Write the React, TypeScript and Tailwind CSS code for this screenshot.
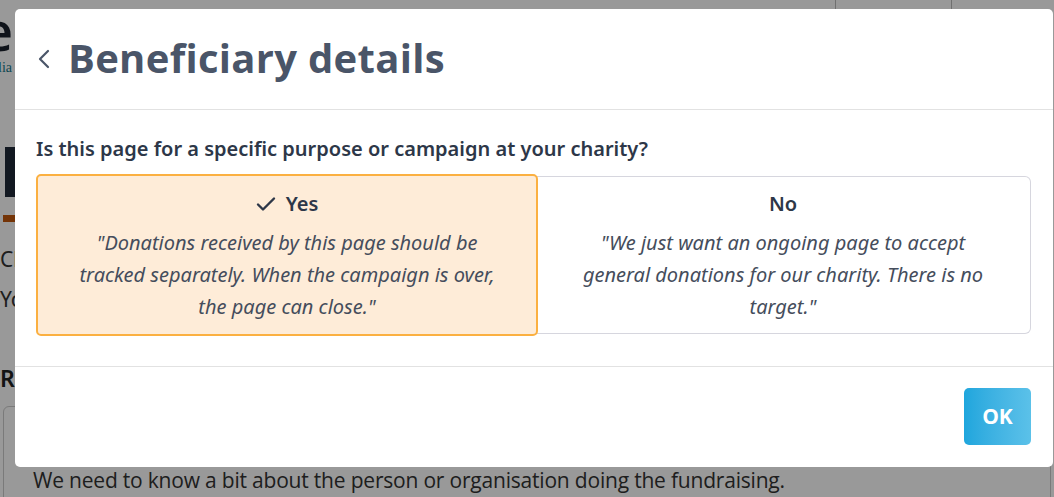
import React from "react";

const Chevron = () => (
  <svg width="14" height="22" viewBox="0 0 14 22" fill="none">
    <path d="M11 3L3 11l8 8" stroke="#4a5568" strokeWidth="2.2" strokeLinecap="round" strokeLinejoin="round" />
  </svg>
);

const Check = () => (
  <svg width="20" height="16" viewBox="0 0 20 16" fill="none">
    <path d="M2 8.5l5 5L18 2.5" stroke="#2d3748" strokeWidth="2.4" strokeLinecap="round" strokeLinejoin="round" />
  </svg>
);

const App = () => {
  return (
    <div className="relative w-[1054px] h-[497px] overflow-hidden bg-white font-['Noto_Sans',sans-serif] text-[#2d3748]">
      {/* page behind the modal */}
      <div className="flex flex-col">
        <div className="flex h-[9px]">
          <div className="w-[835px]" />
          <div className="w-[117px] border-x border-[#bbb]" />
        </div>
        <div className="h-[48px] flex items-end -ml-[18px]">
          <span className="text-[54px] leading-[54px] font-semibold text-[#1a202c] font-['Open_Sans',sans-serif]">
            e
          </span>
        </div>
        <div className="mt-[2px] text-[14px] leading-[18px] text-[#17788a] font-['Liberation_Serif',serif] -ml-[2px]">
          lia
        </div>
        <div className="mt-[70px] ml-[5px] w-[10px] h-[50px] bg-[#1f2937]" />
        <div className="mt-[18px] ml-[3px] w-[40px] h-[7px] bg-[#c2570c]" />
        <div className="mt-[24px] text-[21px] leading-[26px] text-[#333]">Choose</div>
        <div className="mt-[14px] text-[21px] leading-[26px] text-[#333]">Your</div>
        <div className="mt-[52px] text-[23px] font-semibold leading-[28px] text-[#222]">Recipient</div>
        <div className="mt-[14px] mx-[3px] rounded-t-[6px] border border-[#ccc] h-[120px] pt-[58px] pl-[29px] text-[21px] text-[#333] font-['Open_Sans',sans-serif] tracking-[-0.2px]">
          We need to know a bit about the person or organisation doing the fundraising.
        </div>
      </div>

      {/* overlay */}
      <div className="absolute inset-0 bg-black/40" />

      {/* modal */}
      <div className="absolute left-[15px] top-[9px] w-[1038px] h-[458px] bg-white rounded-[5px] flex flex-col">
        <div className="h-[101px] flex items-center pl-[22px] gap-[17px] border-b border-[#e2e2e2]">
          <Chevron />
          <h1 className="text-[40px] font-bold text-[#4a5568] font-['Open_Sans',sans-serif] tracking-[0.3px] pb-[2px]">
            Beneficiary details
          </h1>
        </div>

        <div className="px-[21px] pt-[26px] h-[257px] border-b border-[#e2e2e2]">
          <p className="text-[20px] font-semibold leading-[26px] text-[#2d3748]">
            Is this page for a specific purpose or campaign at your charity?
          </p>
          <div className="flex mt-[12px] mr-[1px]">
            <div className="w-[502px] h-[162px] bg-[#feecd8] border-2 border-[#fbb041] rounded-[5px] flex flex-col items-center pt-[14px] z-10">
              <div className="flex items-center gap-[10px] text-[20px] font-semibold leading-[28px]">
                <Check />
                Yes
              </div>
              <p className="mt-[9px] px-[34px] text-center italic text-[20px] leading-[32px] text-[#454d5c]">
                "Donations received by this page should be tracked separately. When the campaign is over, the page can close."
              </p>
            </div>
            <div className="flex-1 -ml-[2px] mt-[2px] h-[158px] border border-l-0 border-[#d6d6de] rounded-r-[6px] flex flex-col items-center pt-[13px]">
              <div className="text-[20px] font-semibold leading-[28px]">No</div>
              <p className="mt-[9px] px-[34px] text-center italic text-[20px] leading-[32px] text-[#454d5c]">
                "We just want an ongoing page to accept general donations for our charity. There is no target."
              </p>
            </div>
          </div>
        </div>

        <div className="flex-1 flex justify-end items-start pt-[21px] pr-[22px]">
          <button className="w-[67px] h-[57px] rounded-[5px] bg-gradient-to-r from-[#1ea6dd] to-[#5bc1e9] text-white text-[21px] font-bold font-['Open_Sans',sans-serif]">
            OK
          </button>
        </div>
      </div>
    </div>
  );
};

export default App;
